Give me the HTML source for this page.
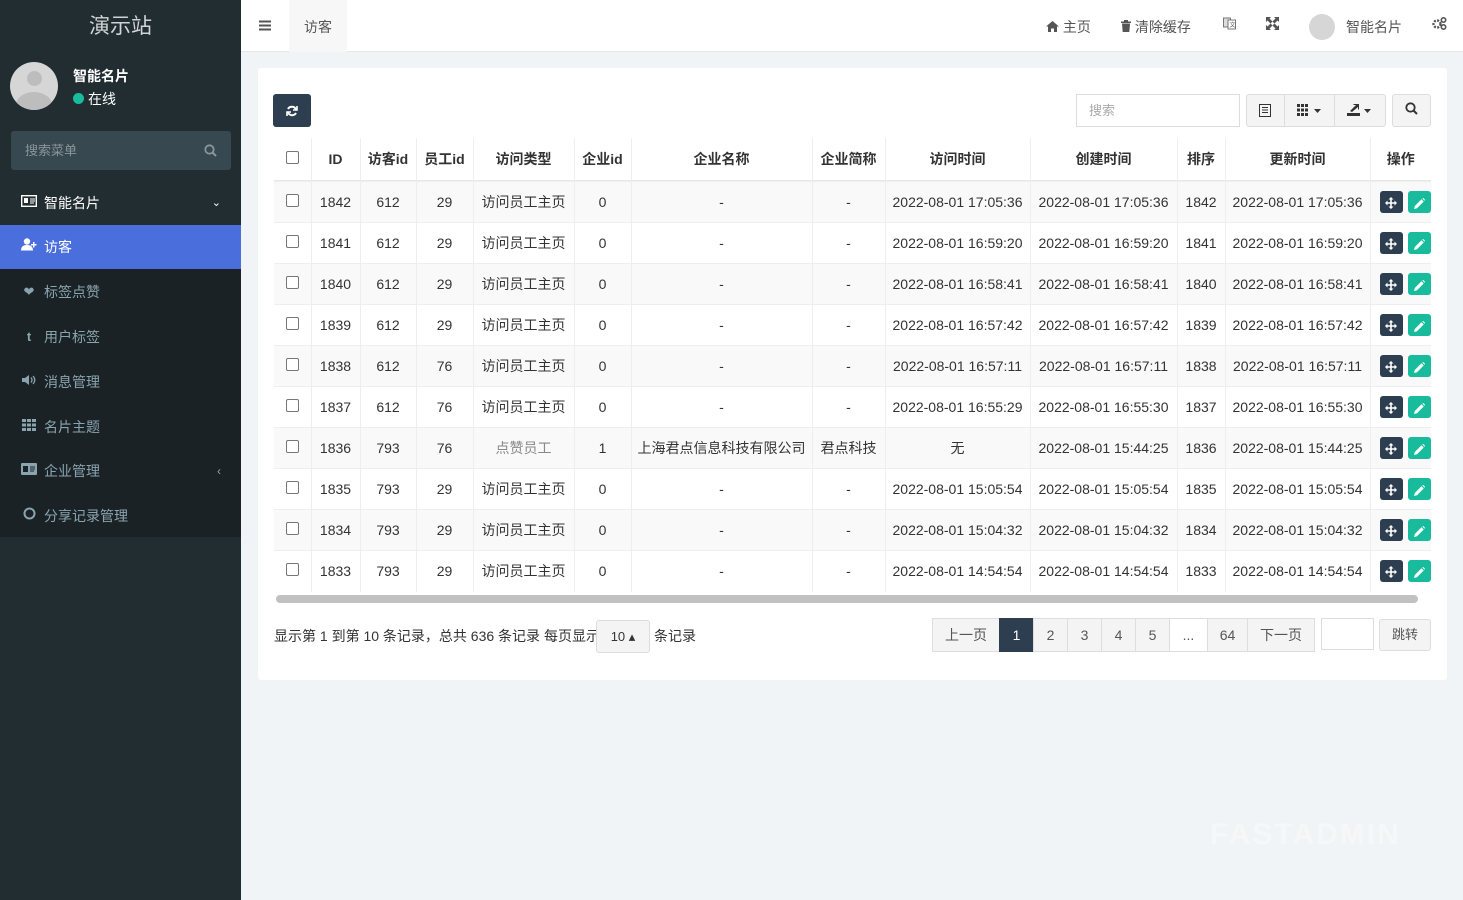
<!DOCTYPE html><html><head><meta charset="utf-8"><style>
*{box-sizing:border-box;margin:0;padding:0}
body{width:1463px;height:900px;overflow:hidden;font-family:"Liberation Sans","Noto Sans CJK SC",sans-serif;font-size:14px;color:#333;background:#f1f4f6;position:relative}
.sb{position:absolute;left:0;top:0;width:241px;height:900px;background:#222d32}
.logo{height:54px;line-height:54px;text-align:center;color:#cfd4d6;font-size:21px;background:#222d32}
.user{position:absolute;top:62px;left:10px}
.av{position:absolute;left:0;top:0;width:48px;height:48px;border-radius:50%;background:#d6d6d6;overflow:hidden}
.av:before{content:"";position:absolute;left:17px;top:9px;width:15px;height:15px;border-radius:50%;background:#bdbdbd}
.av:after{content:"";position:absolute;left:6px;top:30px;width:36px;height:26px;border-radius:50%;background:#bdbdbd}
.un{position:absolute;left:63px;top:4px;color:#fff;font-size:14px;white-space:nowrap;font-weight:bold}
.on{position:absolute;left:63px;top:27px;color:#fff;font-size:14px;white-space:nowrap}
.on i{display:inline-block;width:11px;height:11px;border-radius:50%;background:#18bc9c;margin-right:4px}
.srch{position:absolute;left:11px;top:131px;width:220px;height:39px;background:#374850;border-radius:3px;color:#8a9599;font-size:13px;line-height:39px;padding-left:14px}
.srch svg{position:absolute;right:14px;top:13px}
.mi{position:absolute;left:0;width:241px;height:44px;line-height:44px;padding-left:44px;color:#8aa4af;font-size:14px}
.mi .ic{position:absolute;left:21px;top:0;width:16px;text-align:center;font-size:13px}
.sub{position:absolute;left:0;top:269px;width:241px;height:268px;background:#1a2226}
.hd{position:absolute;left:241px;top:0;right:0;height:52px;background:#fff;border-bottom:1px solid #e4e8ea}
.hd .t{position:absolute;color:#555;font-size:14px;top:17px;white-space:nowrap}
.panel{position:absolute;left:258px;top:68px;width:1189px;height:612px;background:#fff;border-radius:3px}
.btn{position:absolute;border:1px solid #ddd;background:#f4f4f4;border-radius:3px}
table{position:absolute;left:274px;top:138px;border-collapse:collapse;table-layout:fixed;width:1157px}
th,td{border-left:1px solid #eee;text-align:center;white-space:nowrap;overflow:hidden;font-size:14px}
th{height:43px;font-weight:bold;color:#333;border-bottom:2px solid #e8e8e8}
td{height:41px;border-top:1px solid #eee;color:#333}
tr.s td{background:#f9f9f9}
th:first-child,td:first-child{border-left:none}
.cb{display:inline-block;width:13px;height:13px;border:1px solid #777;border-radius:2px;background:#fff;vertical-align:middle;position:relative;top:-3px}
.op{display:inline-block;width:23px;height:22px;border-radius:3px;vertical-align:middle;position:relative;text-align:center}
.pg{position:absolute;top:618px;height:34px;border:1px solid #ddd;background:#f4f4f4;text-align:center;line-height:32px;color:#555;font-size:14px}
</style></head><body>
<div class="sb">
<div class="logo">演示站</div>
<div class="user"><div class="av"></div><div class="un">智能名片</div><div class="on"><i></i>在线</div></div>
<div class="srch">搜索菜单<svg width="13" height="13" viewBox="0 0 13 13"><circle cx="5.5" cy="5.5" r="4.2" fill="none" stroke="#8a9599" stroke-width="1.8"/><path d="M8.5 8.5L12 12" stroke="#8a9599" stroke-width="2"/></svg></div>
<div class="mi" style="top:181px;color:#fff"><span class="ic"><svg width="16" height="12" viewBox="0 0 16 12"><rect x="0.7" y="0.7" width="14.6" height="10.6" fill="none" stroke="#fff" stroke-width="1.4"/><rect x="3" y="3" width="4" height="5" fill="#fff"/><path d="M9 4h5M9 6h5M9 8h4" stroke="#fff"/></svg></span>智能名片<span style="position:absolute;right:20px;font-size:11px">&#8964;</span></div>
<div class="mi" style="top:225px;background:#4a6fdc;color:#fff"><span class="ic"><svg width="16" height="13" viewBox="0 0 16 13" fill="#fff"><circle cx="6" cy="3.5" r="3.2"/><path d="M0 12.5c0-4 2.5-5.5 6-5.5s6 1.5 6 5.5z"/><path d="M12 4h1.5v2h2v1.5h-2v2H12v-2h-2V6h2z"/></svg></span>访客</div>
<div class="sub"></div>
<div class="mi" style="top:270px"><span class="ic">&#10084;</span>标签点赞</div>
<div class="mi" style="top:315px"><span class="ic" style="font-weight:bold">t</span>用户标签</div>
<div class="mi" style="top:360px"><span class="ic"><svg width="14" height="12" viewBox="0 0 14 12" fill="#8aa4af"><path d="M0 4h3l4-3v10L3 8H0z"/><path d="M9 3.5q2 2.5 0 5M11 2q3.5 4 0 8" stroke="#8aa4af" fill="none" stroke-width="1.3"/></svg></span>消息管理</div>
<div class="mi" style="top:405px"><span class="ic"><svg width="14" height="12" viewBox="0 0 14 12" fill="#8aa4af"><rect x="0" y="0" width="4" height="3"/><rect x="5" y="0" width="4" height="3"/><rect x="10" y="0" width="4" height="3"/><rect x="0" y="4.5" width="4" height="3"/><rect x="5" y="4.5" width="4" height="3"/><rect x="10" y="4.5" width="4" height="3"/><rect x="0" y="9" width="4" height="3"/><rect x="5" y="9" width="4" height="3"/><rect x="10" y="9" width="4" height="3"/></svg></span>名片主题</div>
<div class="mi" style="top:449px"><span class="ic"><svg width="16" height="12" viewBox="0 0 16 12"><rect x="0" y="0" width="16" height="12" rx="1" fill="#8aa4af"/><rect x="2" y="3" width="5" height="6" fill="#1a2226"/><path d="M9 4h5M9 6h5M9 8h4" stroke="#1a2226"/></svg></span>企业管理<span style="position:absolute;right:20px;font-size:12px">&#8249;</span></div>
<div class="mi" style="top:494px"><span class="ic"><svg width="13" height="13"><circle cx="6.5" cy="6.5" r="5" fill="none" stroke="#8aa4af" stroke-width="2"/></svg></span>分享记录管理</div>
</div>
<div class="hd">
<div style="position:absolute;left:48px;top:0;width:58px;height:52px;background:#f7f7f7"></div>
<svg style="position:absolute;left:18px;top:20px" width="12" height="11"><path d="M0 1.5h12M0 5.5h12M0 9.5h12" stroke="#555" stroke-width="2"/></svg>
<div class="t" style="left:63px">访客</div>
<div class="t" style="left:805px"><svg width="13" height="11" viewBox="0 0 13 11" fill="#555"><path d="M6.5 0L13 5.5h-2V11H8V7.5H5V11H2V5.5H0z"/></svg> 主页</div>
<div class="t" style="left:880px"><svg width="10" height="12" viewBox="0 0 10 12" fill="#555"><rect x="0" y="1.5" width="10" height="1.5"/><rect x="3" y="0" width="4" height="2"/><path d="M1 3.5h8l-.7 8.5H1.7z"/></svg> 清除缓存</div>
<div class="t" style="left:982px"><svg width="13" height="13" viewBox="0 0 13 13"><rect x="0.5" y="1" width="7" height="9" fill="#ddd" stroke="#777"/><rect x="5" y="3" width="7.5" height="9" fill="#fff" stroke="#777"/><text x="6.5" y="10" font-size="6" fill="#555">文</text></svg></div>
<div class="t" style="left:1025px"><svg width="13" height="13" viewBox="0 0 13 13" fill="#555"><path d="M0 0h5L3.5 1.5 6.5 4.5 4.5 6.5 1.5 3.5 0 5zM13 0v5l-1.5-1.5-3 3-2-2 3-3L8 0zM0 13V8l1.5 1.5 3-3 2 2-3 3L5 13zM13 13H8l1.5-1.5-3-3 2-2 3 3L13 8z"/></svg></div>
<div style="position:absolute;left:1068px;top:14px;width:26px;height:26px;border-radius:50%;background:#d6d6d6"></div>
<div class="t" style="left:1105px">智能名片</div>
<div class="t" style="left:1191px"><svg width="15" height="13" viewBox="0 0 15 13"><circle cx="5" cy="7" r="3.5" fill="none" stroke="#555" stroke-width="2.4" stroke-dasharray="2 1.3"/><circle cx="11.5" cy="3" r="2.2" fill="none" stroke="#555" stroke-width="1.6"/><circle cx="11.5" cy="10" r="2.2" fill="none" stroke="#555" stroke-width="1.6"/></svg></div>
</div>
<div class="panel"></div>
<div style="position:absolute;left:273px;top:94px;width:38px;height:33px;background:#2c3e50;border-radius:3px;text-align:center;padding-top:10px"><svg width="12" height="12" viewBox="0 0 12 12" fill="none" stroke="#fff" stroke-width="2"><path d="M10 4.5A4.5 4.5 0 0 0 2 4M2 7.5A4.5 4.5 0 0 0 10 8"/><path d="M11 1v4H7M1 11V7h4" stroke-width="1.6"/></svg></div>
<div style="position:absolute;left:1076px;top:94px;width:164px;height:33px;border:1px solid #ddd;color:#aaa;font-size:13px;line-height:31px;padding-left:12px">搜索</div>
<div class="btn" style="left:1246px;top:94px;width:140px;height:33px"></div>
<div style="position:absolute;left:1284px;top:95px;width:1px;height:31px;background:#ddd"></div>
<div style="position:absolute;left:1334px;top:95px;width:1px;height:31px;background:#ddd"></div>
<svg style="position:absolute;left:1259px;top:104px" width="12" height="13" viewBox="0 0 12 13"><rect x="0.5" y="0.5" width="11" height="12" fill="none" stroke="#333"/><path d="M3 3.5h6M3 6h6M3 8.5h6" stroke="#333"/></svg>
<svg style="position:absolute;left:1297px;top:104px" width="26" height="12" viewBox="0 0 26 12" fill="#333"><rect x="0" y="0" width="3" height="3"/><rect x="4" y="0" width="3" height="3"/><rect x="8" y="0" width="3" height="3"/><rect x="0" y="4.5" width="3" height="3"/><rect x="4" y="4.5" width="3" height="3"/><rect x="8" y="4.5" width="3" height="3"/><rect x="0" y="9" width="3" height="3"/><rect x="4" y="9" width="3" height="3"/><rect x="8" y="9" width="3" height="3"/><path d="M17 5h7l-3.5 4z"/></svg>
<svg style="position:absolute;left:1347px;top:103px" width="27" height="13" viewBox="0 0 27 13" fill="#333"><path d="M0 10h13v3H0z"/><path d="M3 8l6-6h-3l1-1h5v5l-1 1V4L5 9z"/><path d="M17 6h7l-3.5 4z"/></svg>
<div class="btn" style="left:1392px;top:94px;width:39px;height:33px;text-align:center;line-height:31px"><svg width="13" height="13" viewBox="0 0 13 13"><circle cx="5.5" cy="5.5" r="4.2" fill="none" stroke="#333" stroke-width="1.8"/><path d="M8.5 8.5L12 12" stroke="#333" stroke-width="2"/></svg></div>
<table>
<colgroup><col style="width:37px"><col style="width:49px"><col style="width:56px"><col style="width:57px"><col style="width:101px"><col style="width:57px"><col style="width:181px"><col style="width:73px"><col style="width:145px"><col style="width:147px"><col style="width:48px"><col style="width:145px"><col style="width:61px"></colgroup>
<tr><th><span class="cb"></span></th><th>ID</th><th>访客id</th><th>员工id</th><th>访问类型</th><th>企业id</th><th>企业名称</th><th>企业简称</th><th>访问时间</th><th>创建时间</th><th>排序</th><th>更新时间</th><th>操作</th></tr>
</table>
<table style="top:181px" id="tb"></table>
<div style="position:absolute;left:276px;top:595px;width:1142px;height:8px;border-radius:4px;background:#c1c1c1"></div>
<div style="position:absolute;left:274px;top:626px;font-size:14px;white-space:nowrap">显示第 1 到第 10 条记录，总共 636 条记录 每页显示</div>
<div class="btn" style="left:596px;top:620px;width:54px;height:33px;font-size:13px;line-height:31px;text-align:center">10 &#9652;</div>
<div style="position:absolute;left:654px;top:626px;font-size:14px">条记录</div>
<div class="pg" style="left:932px;width:68px">上一页</div>
<div class="pg" style="left:999px;width:35px;background:#2c3e50;color:#fff;border-color:#2c3e50">1</div>
<div class="pg" style="left:1033px;width:35px">2</div>
<div class="pg" style="left:1067px;width:35px">3</div>
<div class="pg" style="left:1101px;width:35px">4</div>
<div class="pg" style="left:1135px;width:35px">5</div>
<div class="pg" style="left:1169px;width:39px;background:#fff">...</div>
<div class="pg" style="left:1207px;width:41px">64</div>
<div class="pg" style="left:1247px;width:68px">下一页</div>
<div style="position:absolute;left:1321px;top:618px;width:53px;height:32px;border:1px solid #ddd;background:#fff"></div>
<div class="btn" style="left:1379px;top:619px;width:52px;height:32px;line-height:30px;text-align:center;font-size:13px;color:#555">跳转</div>
<div style="position:absolute;left:1210px;top:818px;font-size:30px;color:#f5f7f8;font-weight:bold;letter-spacing:2px">FASTADMIN</div>
<script>
var d=[[1842,612,29,"17:05:36","17:05:36","17:05:36"],[1841,612,29,"16:59:20","16:59:20","16:59:20"],[1840,612,29,"16:58:41","16:58:41","16:58:41"],[1839,612,29,"16:57:42","16:57:42","16:57:42"],[1838,612,76,"16:57:11","16:57:11","16:57:11"],[1837,612,76,"16:55:29","16:55:30","16:55:30"],[1836,793,76,"","15:44:25","15:44:25"],[1835,793,29,"15:05:54","15:05:54","15:05:54"],[1834,793,29,"15:04:32","15:04:32","15:04:32"],[1833,793,29,"14:54:54","14:54:54","14:54:54"]];
var h='<colgroup><col style="width:37px"><col style="width:49px"><col style="width:56px"><col style="width:57px"><col style="width:101px"><col style="width:57px"><col style="width:181px"><col style="width:73px"><col style="width:145px"><col style="width:147px"><col style="width:48px"><col style="width:145px"><col style="width:61px"></colgroup>';
var mv='<span class="op" style="background:#2c3e50;padding-top:5px"><svg width="12" height="12" viewBox="0 0 12 12" fill="#fff"><path d="M6 0l2.5 2.5H6.8v2.7h2.7V3.5L12 6 9.5 8.5V6.8H6.8v2.7h1.7L6 12 3.5 9.5h1.7V6.8H2.5v1.7L0 6l2.5-2.5v1.7h2.7V2.5H3.5z"/></svg></span>',ed='<span class="op" style="background:#18bc9c;margin-left:5px;padding-top:5px"><svg width="11" height="11" viewBox="0 0 11 11" fill="#fff"><path d="M0 11l.8-3L7.5 1.3l2.2 2.2L3 10.2zM8.3.5L9.2 0l1.8 1.8-.5.9z"/></svg></span>';
d.forEach(function(r,i){var sp=r[0]==1836;h+='<tr'+(i%2==0?' class="s"':'')+'><td><span class="cb"></span></td><td>'+r[0]+'</td><td>'+r[1]+'</td><td>'+r[2]+'</td><td'+(sp?' style="color:#888"':'')+'>'+(sp?'点赞员工':'访问员工主页')+'</td><td>'+(sp?1:0)+'</td><td>'+(sp?'上海君点信息科技有限公司':'-')+'</td><td>'+(sp?'君点科技':'-')+'</td><td>'+(sp?'无':'2022-08-01 '+r[3])+'</td><td>2022-08-01 '+r[4]+'</td><td>'+r[0]+'</td><td>2022-08-01 '+r[5]+'</td><td style="text-align:left;padding-left:9px">'+mv+ed+'</td></tr>'});
document.getElementById('tb').innerHTML=h;
</script>
</body></html>
